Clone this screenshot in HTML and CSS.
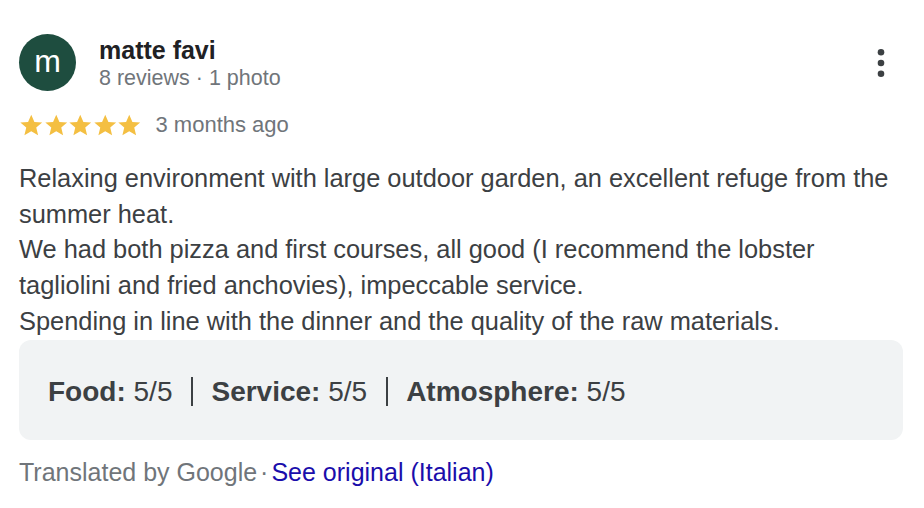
FILE: index.html
```html
<!DOCTYPE html>
<html>
<head>
<meta charset="utf-8">
<link rel="stylesheet" href="styles.css">
</head>
<body>
<div class="review">
  <div class="header">
    <div class="avatar">m</div>
    <div class="who">
      <div class="name">matte favi</div>
      <div class="meta">8 reviews · 1 photo</div>
    </div>
    <button class="more" aria-label="More">
      <svg width="24" height="32" viewBox="0 0 24 32"><circle cx="12" cy="5.3" r="3.3"/><circle cx="12" cy="16" r="3.3"/><circle cx="12" cy="26.7" r="3.3"/></svg>
    </button>
  </div>
  <div class="rating">
    <div class="stars">
      <svg viewBox="0 0 24 24"><path d="M12 1.6l3.1 7.1 7.6.6-5.8 5 1.8 7.5L12 17.8l-6.7 4 1.8-7.5-5.8-5 7.6-.6z"/></svg>
      <svg viewBox="0 0 24 24"><path d="M12 1.6l3.1 7.1 7.6.6-5.8 5 1.8 7.5L12 17.8l-6.7 4 1.8-7.5-5.8-5 7.6-.6z"/></svg>
      <svg viewBox="0 0 24 24"><path d="M12 1.6l3.1 7.1 7.6.6-5.8 5 1.8 7.5L12 17.8l-6.7 4 1.8-7.5-5.8-5 7.6-.6z"/></svg>
      <svg viewBox="0 0 24 24"><path d="M12 1.6l3.1 7.1 7.6.6-5.8 5 1.8 7.5L12 17.8l-6.7 4 1.8-7.5-5.8-5 7.6-.6z"/></svg>
      <svg viewBox="0 0 24 24"><path d="M12 1.6l3.1 7.1 7.6.6-5.8 5 1.8 7.5L12 17.8l-6.7 4 1.8-7.5-5.8-5 7.6-.6z"/></svg>
    </div>
    <span class="when">3 months ago</span>
  </div>
  <div class="text">Relaxing environment with large outdoor garden, an excellent refuge from the summer heat.<br>We had both pizza and first courses, all good (I recommend the lobster tagliolini and fried anchovies), impeccable service.<br>Spending in line with the dinner and the quality of the raw materials.</div>
  <div class="scores">
    <span><b>Food:</b> 5/5</span><span class="sep"></span><span><b>Service:</b> 5/5</span><span class="sep"></span><span><b>Atmosphere:</b> 5/5</span>
  </div>
  <div class="foot">Translated by Google<span class="dot">·</span><a href="#">See original (Italian)</a></div>
</div>
</body>
</html>
```
FILE: styles.css
```css
html, body {
  margin: 0;
  background: #ffffff;
}
body {
  font-family: "Liberation Sans", Arial, sans-serif;
  color: #3c4043;
}
.review {
  padding: 34px 21px 0 19px;
  width: 884px;
}
.header {
  display: flex;
  align-items: flex-start;
}
.avatar {
  width: 57px;
  height: 57px;
  border-radius: 50%;
  background: #1e4d3f;
  color: #ffffff;
  font-size: 32px;
  line-height: 54px;
  text-align: center;
  flex: none;
}
.who {
  margin-left: 23px;
  flex: 1;
}
.name {
  font-weight: bold;
  font-size: 25px;
  color: #202124;
  line-height: 30px;
  margin-top: 1px;
}
.meta {
  font-size: 21.5px;
  color: #70757a;
  line-height: 26px;
}
.more {
  border: 0;
  background: none;
  padding: 0;
  margin: 13px 10px 0 0;
  width: 24px;
  height: 32px;
  fill: #3c4043;
}
.more svg {
  display: block;
}
.rating {
  display: flex;
  align-items: center;
  margin-top: 20px;
  height: 28px;
}
.stars {
  display: flex;
}
.stars svg {
  width: 24.5px;
  height: 24.5px;
  fill: #f4bf42;
}
.when {
  margin-left: 14px;
  font-size: 22px;
  color: #70757a;
}
.text {
  margin-top: 22px;
  font-size: 25.4px;
  line-height: 35.7px;
  color: #3c4043;
}
.scores {
  margin-top: 0;
  background: #f1f3f4;
  border-radius: 12px;
  height: 100px;
  box-sizing: border-box;
  padding: 4px 0 0 29px;
  display: flex;
  align-items: center;
  font-size: 28px;
  color: #3c4043;
}
.sep {
  width: 2px;
  height: 29px;
  background: #3c4043;
  margin: 0 18px 0 19px;
}
.foot {
  margin-top: 18px;
  font-size: 25px;
  color: #70757a;
}
.dot {
  margin: 0 3px;
}
.foot a {
  color: #1a0dab;
  text-decoration: none;
}
```
